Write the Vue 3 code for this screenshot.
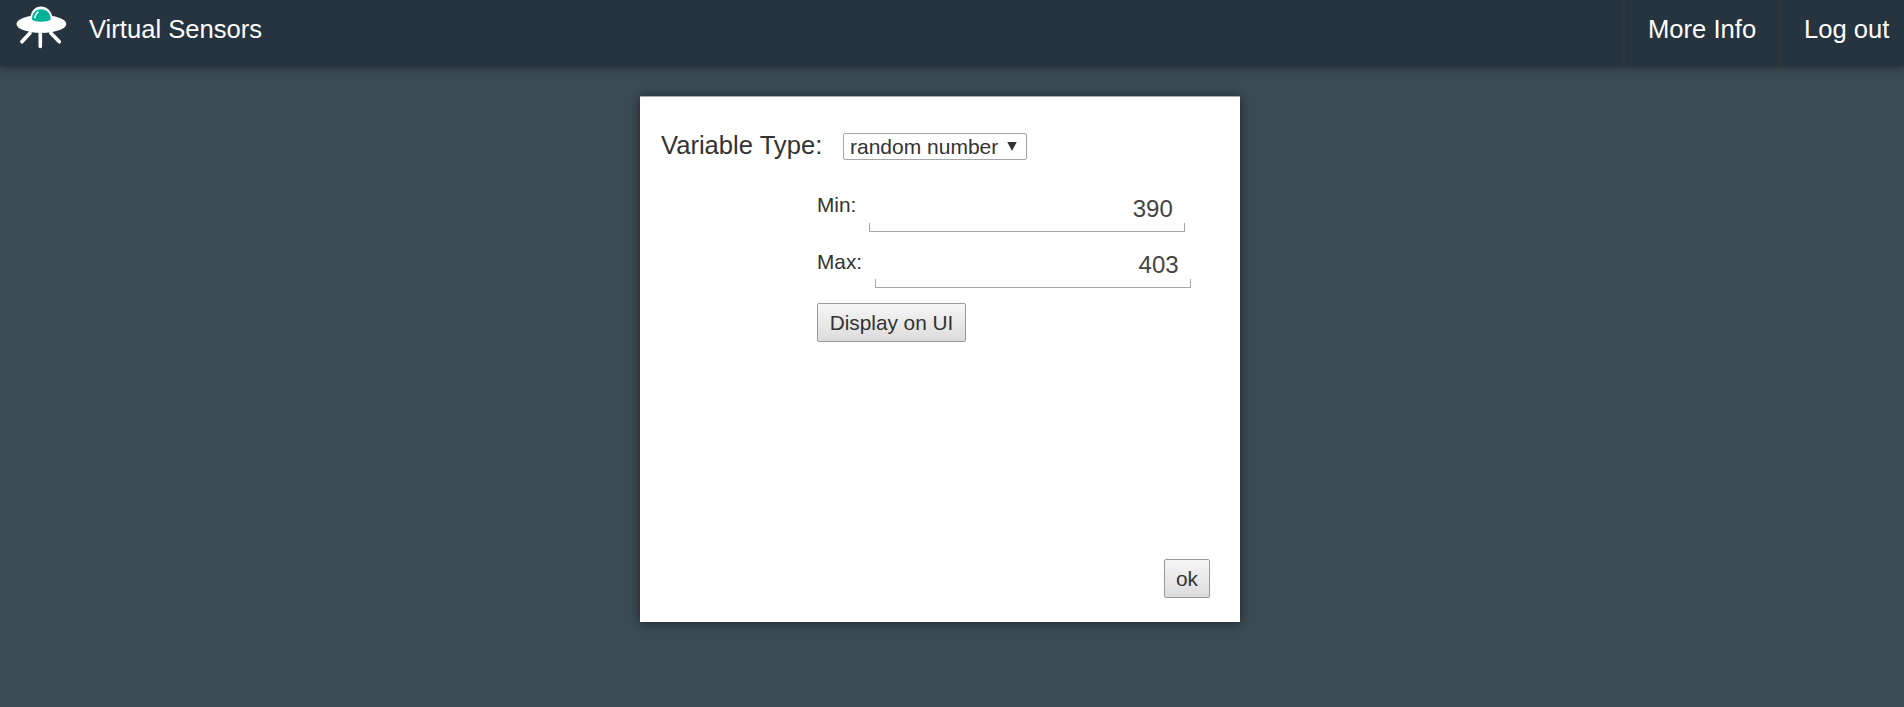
<script setup>
import { ref } from 'vue'

const type = ref('random number')
const min = ref('390')
const max = ref('403')
</script>

<template>
  <div class="page">
    <header class="bar">
      <svg class="logo" viewBox="0 0 52 44" aria-hidden="true">
        <g stroke="#fff" stroke-width="3.6" stroke-linecap="round">
          <path d="M15 27 L6.9 35.8 M25.3 27 V40.5 M35.8 27 L44.3 35.8" />
        </g>
        <path d="M15 12 C16.5 4.5 20 0.6 26 0.6 C32 0.6 36 4.5 37.8 12 Z" fill="#fff" />
        <ellipse cx="26.4" cy="18" rx="24.9" ry="9" fill="#fff" />
        <path d="M17 13.4 C17 7 20.5 3.3 26 3.3 C31.5 3.3 35.7 7 35.7 13.4 C32.5 16.4 19.5 16.4 17 13.4 Z" fill="#00b398" />
        <path d="M19.9 11.8 Q20.4 7.8 23.2 6.2" fill="none" stroke="#e6fffa" stroke-width="1.5" stroke-linecap="round" />
      </svg>
      <span class="title">Virtual Sensors</span>
      <nav class="nav">
        <a class="link">More Info</a>
        <a class="link last">Log out</a>
      </nav>
    </header>

    <main class="card">
      <div class="type-row">
        <label class="type-label">Variable Type:</label>
        <div class="select">
          <span>{{ type }}</span>
          <svg class="arrow" viewBox="0 0 10 9"><path d="M0.3 0H9.7L5 9Z" fill="#333" /></svg>
        </div>
      </div>
      <div class="fields">
        <div class="field">
          <label>Min:</label>
          <div class="entry"><input v-model="min" type="text" /></div>
        </div>
        <div class="field max">
          <label>Max:</label>
          <div class="entry"><input v-model="max" type="text" /></div>
        </div>
        <button class="btn display">Display on UI</button>
      </div>
      <button class="btn ok">ok</button>
    </main>
  </div>
</template>

<style>
body {
  background: #3b4b53;
}
</style>

<style scoped>
.page {
  height: 707px;
  overflow: hidden;
  background: #3b4b53;
  font-family: "Liberation Sans", Arial, sans-serif;
  color: #333;
}
.bar {
  display: flex;
  height: 66px;
  background: #263440;
  box-shadow: 0 1px 8px rgba(0, 0, 0, 0.45);
  color: #fff;
  font-size: 25.6px;
  line-height: 30px;
}
.logo {
  width: 52px;
  height: 44px;
  margin: 6px 0 0 15px;
}
.title {
  margin: 14px 0 0 22px;
}
.nav {
  display: flex;
  margin-left: auto;
}
.link {
  box-sizing: border-box;
  width: 157px;
  padding: 14px 0 0 23px;
  border-left: 4px solid #2b363f;
  white-space: nowrap;
}
.last {
  width: 126px;
  padding-left: 22px;
}
.card {
  box-sizing: border-box;
  display: flex;
  flex-direction: column;
  width: 600px;
  height: 526px;
  margin: 30px 0 0 640px;
  padding: 36px 30px 24px 21px;
  border-top: 1px solid #a5abb0;
  background: #fff;
  box-shadow: 0 1px 10px rgba(0, 0, 0, 0.5);
}
.type-row {
  display: flex;
  height: 28px;
}
.type-label {
  width: 182px;
  margin-top: -3px;
  font-size: 25.6px;
  line-height: 30px;
}
.select {
  box-sizing: border-box;
  display: flex;
  width: 184px;
  height: 27px;
  padding-left: 6px;
  border: 1px solid #a6a6a6;
  border-radius: 2px;
  font-size: 21px;
  line-height: 26px;
}
.arrow {
  width: 10px;
  height: 9px;
  margin: 8px 0 0 9px;
}
.fields {
  display: flex;
  flex-direction: column;
  align-items: flex-start;
  margin: 31px 0 0 156px;
}
.field {
  display: flex;
  height: 56px;
  font-size: 20.8px;
  line-height: 24px;
}
.field label {
  margin: 1px 12.5px 0 0;
}
.max {
  height: 55px;
}
.max label {
  margin-top: 2px;
}
.entry {
  box-sizing: border-box;
  width: 316px;
  height: 40px;
  border: solid #a6a6a6;
  border-width: 0 1px 1px;
  border-image: linear-gradient(to bottom, transparent 31px, #a6a6a6 31px) 1;
}
input {
  box-sizing: border-box;
  display: block;
  width: 100%;
  height: 32px;
  padding: 2px 11px 0 0;
  border: 0;
  outline: 0;
  background: none;
  color: #444;
  font: 24px "Liberation Sans", Arial, sans-serif;
  text-align: right;
}
.btn {
  box-sizing: border-box;
  height: 39px;
  padding: 0;
  border: 1px solid #999;
  border-radius: 2px;
  background: linear-gradient(#f6f6f6, #dcdcdc);
  color: #333;
  font: 20.8px "Liberation Sans", Arial, sans-serif;
}
.display {
  width: 149px;
}
.ok {
  width: 46px;
  margin: auto 0 0 auto;
}
</style>
